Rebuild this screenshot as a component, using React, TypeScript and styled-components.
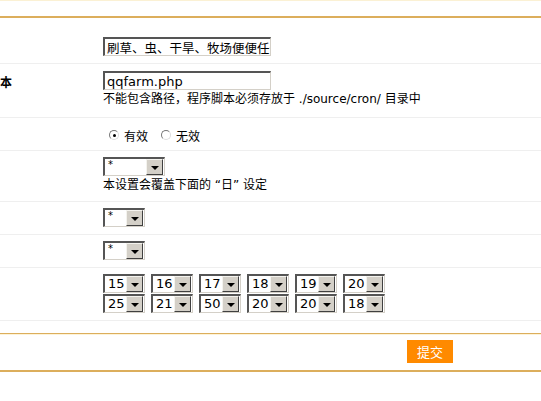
import React from 'react';
import styled, { createGlobalStyle } from 'styled-components';

const GlobalStyle = createGlobalStyle`
  html, body {
    margin: 0;
    padding: 0;
    background: #ffffff;
  }
  body {
    font-family: "DejaVu Sans", Verdana, "Noto Sans CJK SC", sans-serif;
    font-size: 12px;
    color: #000;
  }
`;

const Page = styled.div`
  width: 541px;
  height: 401px;
  overflow: hidden;
  border-top: 1px solid #fbf1d4;
`;

const Form = styled.div`
  margin-top: 15px;
  border-top: 2px solid #dcae5c;
`;

const Row = styled.div<{ $top: number; $bottom: number }>`
  display: grid;
  grid-template-columns: 103px 1fr;
  padding: ${(p) => p.$top}px 0 ${(p) => p.$bottom}px;
  border-bottom: 1px solid #efefef;
`;

const Label = styled.div`
  font-family: "Noto Sans CJK SC", sans-serif;
  font-weight: bold;
  font-size: 12px;
  line-height: 14px;
  padding-top: 4px;
`;

const Field = styled.div`
  display: flex;
  flex-direction: column;
  align-items: flex-start;
`;

const TextInput = styled.div<{ $cjk?: boolean }>`
  box-sizing: border-box;
  width: 168px;
  height: 19px;
  border-style: solid;
  border-width: 2px 1px 1px 2px;
  border-color: #555 #d4d0c8 #d4d0c8 #555;
  background: #fff;
  padding-left: 2px;
  overflow: hidden;
  white-space: nowrap;
  font-family: ${(p) => (p.$cjk ? '"Noto Sans CJK SC", sans-serif' : '"DejaVu Sans", Verdana, sans-serif')};
  font-size: ${(p) => (p.$cjk ? '12.5px' : '13px')};
  line-height: 17px;
`;

const Tip = styled.div`
  font-family: "DejaVu Sans", "Noto Sans CJK SC", sans-serif;
  font-size: 12px;
  line-height: 15px;
  margin-top: 2px;
  white-space: nowrap;
`;

const RadioGroup = styled.div`
  display: flex;
  align-items: center;
  padding-left: 6px;
  height: 14px;
  font-family: "Noto Sans CJK SC", sans-serif;
  font-size: 12px;
`;

const RadioItem = styled.label`
  display: flex;
  align-items: center;
  gap: 5px;
  margin-right: 13px;
`;

const RadioDot = styled.span<{ $on?: boolean }>`
  position: relative;
  box-sizing: border-box;
  width: 10px;
  height: 10px;
  border-radius: 50%;
  border: 1px solid;
  border-color: #777 #ddd #ddd #777;
  background: #fff;
  &::after {
    content: '';
    display: ${(p) => (p.$on ? 'block' : 'none')};
    position: absolute;
    left: 2.5px;
    top: 2.5px;
    width: 3px;
    height: 3px;
    background: #000;
    border-radius: 50%;
  }
`;

const SelectBox = styled.div<{ $w: number }>`
  box-sizing: border-box;
  width: ${(p) => p.$w}px;
  height: 19px;
  display: flex;
  border-style: solid;
  border-width: 2px 1px 1px 2px;
  border-color: #555 #d4d0c8 #d4d0c8 #555;
  background: #fff;
`;

const SelectValue = styled.span<{ $small?: boolean }>`
  flex: 1;
  padding-left: 3px;
  font-family: "DejaVu Sans", Verdana, sans-serif;
  font-size: ${(p) => (p.$small ? '10px' : '13px')};
  line-height: ${(p) => (p.$small ? '11px' : '16px')};
  overflow: hidden;
`;

const ArrowButton = styled.span`
  box-sizing: border-box;
  width: 17px;
  height: 16px;
  margin: 0 1px 0 0;
  display: flex;
  align-items: center;
  justify-content: center;
  background: #d4d0c8;
  border-style: solid;
  border-width: 1px;
  border-color: #f4f3ee #404040 #404040 #f4f3ee;
  &::after {
    content: '';
    border-left: 4px solid transparent;
    border-right: 4px solid transparent;
    border-top: 4px solid #000;
    margin-top: 1px;
  }
`;

const Select = ({ value, width = 42 }: { value: string; width?: number }) => (
  <SelectBox $w={width}>
    <SelectValue $small={value === '*'}>{value}</SelectValue>
    <ArrowButton />
  </SelectBox>
);

const SelectGrid = styled.div`
  display: grid;
  grid-template-columns: repeat(6, 42px);
  column-gap: 6px;
  row-gap: 1px;
`;

const Footer = styled.div`
  margin-top: 12px;
  border-top: 1px solid #dcae5c;
  border-bottom: 2px solid #dcae5c;
  box-shadow: inset 0 1px 0 #fdf3d8;
  padding: 6px 0 7px 407px;
`;

const SubmitButton = styled.button`
  width: 46px;
  height: 23px;
  border: none;
  background: #ff8a00;
  color: #fff;
  font-family: "Noto Sans CJK SC", sans-serif;
  font-size: 13px;
  padding: 0;
  display: block;
`;

const minutes = ['15', '16', '17', '18', '19', '20', '25', '21', '50', '20', '20', '18'];

export default function App() {
  return (
    <Page>
      <GlobalStyle />
      <Form>
        <Row $top={19} $bottom={7}>
          <Label />
          <Field>
            <TextInput $cjk>刷草、虫、干旱、牧场便便任务</TextInput>
          </Field>
        </Row>
        <Row $top={7} $bottom={10}>
          <Label>本</Label>
          <Field>
            <TextInput>qqfarm.php</TextInput>
            <Tip>不能包含路径，程序脚本必须存放于 ./source/cron/ 目录中</Tip>
          </Field>
        </Row>
        <Row $top={10} $bottom={8}>
          <Label />
          <Field>
            <RadioGroup>
              <RadioItem>
                <RadioDot $on />
                有效
              </RadioItem>
              <RadioItem>
                <RadioDot />
                无效
              </RadioItem>
            </RadioGroup>
          </Field>
        </Row>
        <Row $top={6} $bottom={8}>
          <Label />
          <Field>
            <Select value="*" width={62} />
            <Tip>本设置会覆盖下面的 “日” 设定</Tip>
          </Field>
        </Row>
        <Row $top={6} $bottom={7}>
          <Label />
          <Field>
            <Select value="*" />
          </Field>
        </Row>
        <Row $top={6} $bottom={7}>
          <Label />
          <Field>
            <Select value="*" />
          </Field>
        </Row>
        <Row $top={6} $bottom={7}>
          <Label />
          <Field>
            <SelectGrid>
              {minutes.map((m, i) => (
                <Select key={`min-${i}`} value={m} />
              ))}
            </SelectGrid>
          </Field>
        </Row>
      </Form>
      <Footer>
        <SubmitButton>提交</SubmitButton>
      </Footer>
    </Page>
  );
}
